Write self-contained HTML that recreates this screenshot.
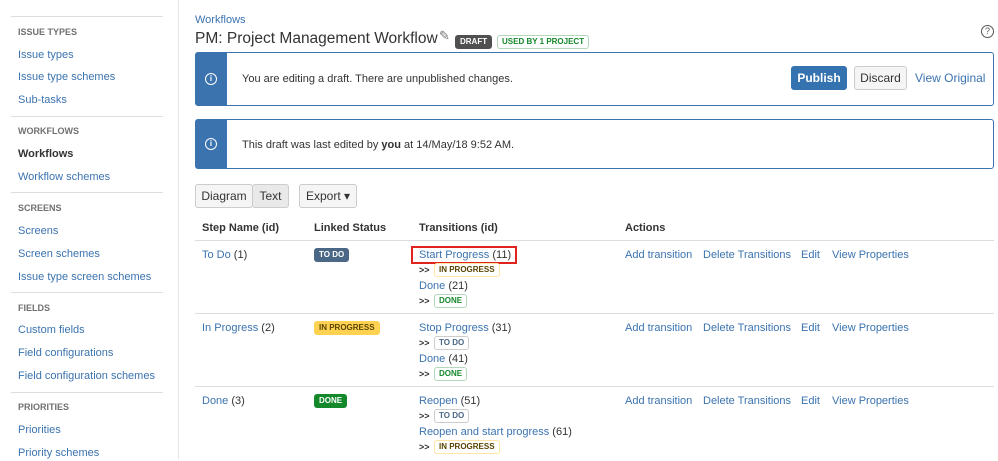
<!DOCTYPE html>
<html><head><style>
body{margin:0;width:998px;height:459px;overflow:hidden;background:#fff;font-family:"Liberation Sans",Arial,sans-serif;font-size:11px;color:#333;position:relative}
.a{position:absolute;white-space:nowrap;line-height:16px}
a,.l{color:#3b73af;text-decoration:none}
.h{font-size:9px;font-weight:bold;color:#707070}
.sep{position:absolute;left:11px;width:152px;height:1px;background:#ddd}
.lz{position:absolute;font-size:8px;font-weight:bold;border-radius:3px;padding:0 4px;line-height:12px;white-space:nowrap}
.ip{background:#fff;color:#594300;border:1px solid #ffe5a0}
.dn{background:#fff;color:#14892c;border:1px solid #b2d8b9}
.td{background:#4a6785;color:#fff;border:1px solid #4a6785}
.ipf{background:#ffd351;color:#594300;border:1px solid #ffd351}
.dnf{background:#14892c;color:#fff;border:1px solid #14892c}
.ban{position:absolute;left:195px;width:799px;border:1px solid #3b73af;border-radius:3px;box-sizing:border-box;background:#fff}
.ban .s{position:absolute;left:0;top:0;bottom:0;width:31px;background:#3b73af}
.ic{position:absolute;left:9px;width:10px;height:10px;border:1.5px solid #fff;border-radius:50%;color:#fff;font-size:8px;font-weight:bold;text-align:center;line-height:10px}
.btn{position:absolute;border:1px solid #ccc;border-radius:3px;background:#f5f5f5;box-sizing:border-box;text-align:center;font-size:12px;color:#333}
.row{position:absolute;left:195px;width:799px;height:1px;background:#ddd}
.gt{font-size:9px;font-weight:bold}
</style></head><body>
<div style="position:absolute;left:178px;top:0;width:1px;height:459px;background:#e5e5e5"></div>
<div class="sep" style="top:16px"></div>
<div class="a h" style="left:18px;top:24px">ISSUE TYPES</div>
<a class="a" style="left:18px;top:47px">Issue types</a>
<a class="a" style="left:18px;top:69px">Issue type schemes</a>
<a class="a" style="left:18px;top:92px">Sub-tasks</a>
<div class="sep" style="top:116px"></div>
<div class="a h" style="left:18px;top:123px">WORKFLOWS</div>
<div class="a" style="left:18px;top:146px;font-weight:bold;color:#333">Workflows</div>
<a class="a" style="left:18px;top:169px">Workflow schemes</a>
<div class="sep" style="top:192px"></div>
<div class="a h" style="left:18px;top:200px">SCREENS</div>
<a class="a" style="left:18px;top:223px">Screens</a>
<a class="a" style="left:18px;top:246px">Screen schemes</a>
<a class="a" style="left:18px;top:269px">Issue type screen schemes</a>
<div class="sep" style="top:292px"></div>
<div class="a h" style="left:18px;top:300px">FIELDS</div>
<a class="a" style="left:18px;top:322px">Custom fields</a>
<a class="a" style="left:18px;top:345px">Field configurations</a>
<a class="a" style="left:18px;top:368px">Field configuration schemes</a>
<div class="sep" style="top:392px"></div>
<div class="a h" style="left:18px;top:399px">PRIORITIES</div>
<a class="a" style="left:18px;top:422px">Priorities</a>
<a class="a" style="left:18px;top:445px">Priority schemes</a>

<a class="a" style="left:195px;top:12px">Workflows</a>
<div class="a" style="left:195px;top:30px;font-size:15.5px;line-height:18px;color:#333">PM: Project Management Workflow</div>
<div class="a" style="left:439px;top:28px;font-size:13px;color:#777">✎</div>
<div class="lz" style="left:455px;top:35px;background:#505050;color:#fff;border:1px solid #505050">DRAFT</div>
<div class="lz dn" style="left:497px;top:35px">USED BY 1 PROJECT</div>
<div class="a" style="left:981px;top:25px;width:11px;height:11px;border:1px solid #555;border-radius:50%;font-size:9px;text-align:center;line-height:11px;color:#555">?</div>

<div class="ban" style="top:52px;height:54px"><div class="s"></div><div class="ic" style="top:20px">i</div>
<div class="a" style="left:46px;top:18px">You are editing a draft. There are unpublished changes.</div></div>
<div class="btn" style="left:791px;top:66px;width:56px;height:24px;background:#3572b0;border-color:#3572b0;color:#fff;font-weight:bold;line-height:22px">Publish</div>
<div class="btn" style="left:854px;top:66px;width:53px;height:24px;line-height:22px">Discard</div>
<a class="a" style="left:915px;top:70px;font-size:12px">View Original</a>

<div class="ban" style="top:119px;height:50px"><div class="s"></div><div class="ic" style="top:18px">i</div>
<div class="a" style="left:46px;top:17px">This draft was last edited by <b>you</b> at 14/May/18 9:52 AM.</div></div>

<div class="btn" style="left:195px;top:184px;width:58px;height:24px;line-height:22px">Diagram</div>
<div class="btn" style="left:252px;top:184px;width:37px;height:24px;line-height:22px;background:#e9e9e9">Text</div>
<div class="btn" style="left:299px;top:184px;width:58px;height:24px;line-height:22px">Export ▾</div>

<div class="a" style="left:202px;top:220px;font-weight:bold">Step Name (id)</div>
<div class="a" style="left:314px;top:220px;font-weight:bold">Linked Status</div>
<div class="a" style="left:419px;top:220px;font-weight:bold">Transitions (id)</div>
<div class="a" style="left:625px;top:220px;font-weight:bold">Actions</div>
<div class="row" style="top:240px"></div>

<div class="a" style="left:202px;top:247px"><a>To Do</a> (1)</div>
<div class="lz td" style="left:314px;top:248px">TO DO</div>
<div class="a" style="left:411px;top:246px;width:102px;height:14px;border:2px solid #e0231c"></div>
<div class="a" style="left:419px;top:247px"><a>Start Progress</a> (11)</div>
<div class="a gt" style="left:419px;top:262px">&gt;&gt;</div>
<div class="lz ip" style="left:434px;top:263px">IN PROGRESS</div>
<div class="a" style="left:419px;top:278px"><a>Done</a> (21)</div>
<div class="a gt" style="left:419px;top:293px">&gt;&gt;</div>
<div class="lz dn" style="left:434px;top:294px">DONE</div>
<div class="row" style="top:313px"></div>

<div class="a" style="left:202px;top:320px"><a>In Progress</a> (2)</div>
<div class="lz ipf" style="left:314px;top:321px">IN PROGRESS</div>
<div class="a" style="left:419px;top:320px"><a>Stop Progress</a> (31)</div>
<div class="a gt" style="left:419px;top:335px">&gt;&gt;</div>
<div class="lz" style="left:434px;top:336px;border:1px solid #ccc;color:#4a6785">TO DO</div>
<div class="a" style="left:419px;top:351px"><a>Done</a> (41)</div>
<div class="a gt" style="left:419px;top:366px">&gt;&gt;</div>
<div class="lz dn" style="left:434px;top:367px">DONE</div>
<div class="row" style="top:386px"></div>

<div class="a" style="left:202px;top:393px"><a>Done</a> (3)</div>
<div class="lz dnf" style="left:314px;top:394px">DONE</div>
<div class="a" style="left:419px;top:393px"><a>Reopen</a> (51)</div>
<div class="a gt" style="left:419px;top:408px">&gt;&gt;</div>
<div class="lz" style="left:434px;top:409px;border:1px solid #ccc;color:#4a6785">TO DO</div>
<div class="a" style="left:419px;top:424px"><a>Reopen and start progress</a> (61)</div>
<div class="a gt" style="left:419px;top:439px">&gt;&gt;</div>
<div class="lz ip" style="left:434px;top:440px">IN PROGRESS</div>

<div class="a" style="left:625px;top:247px"><a>Add transition</a></div><div class="a" style="left:703px;top:247px"><a>Delete Transitions</a></div><div class="a" style="left:801px;top:247px"><a>Edit</a></div><div class="a" style="left:832px;top:247px"><a>View Properties</a></div>
<div class="a" style="left:625px;top:320px"><a>Add transition</a></div><div class="a" style="left:703px;top:320px"><a>Delete Transitions</a></div><div class="a" style="left:801px;top:320px"><a>Edit</a></div><div class="a" style="left:832px;top:320px"><a>View Properties</a></div>
<div class="a" style="left:625px;top:393px"><a>Add transition</a></div><div class="a" style="left:703px;top:393px"><a>Delete Transitions</a></div><div class="a" style="left:801px;top:393px"><a>Edit</a></div><div class="a" style="left:832px;top:393px"><a>View Properties</a></div>
</body></html>
